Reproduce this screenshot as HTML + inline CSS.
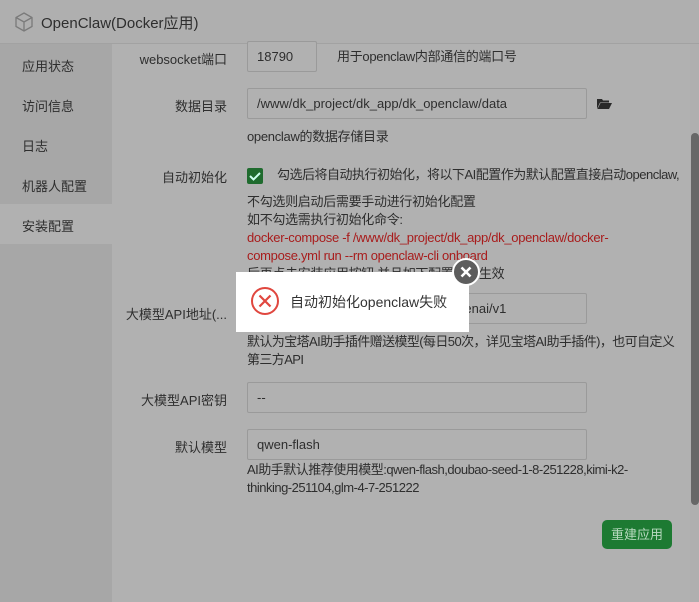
<!DOCTYPE html>
<html><head><meta charset="utf-8"><style>
*{margin:0;padding:0;box-sizing:border-box}
body{width:699px;height:602px;overflow:hidden;background:#b1b1b1;font-family:"Liberation Sans","Noto Sans CJK SC",sans-serif;font-size:13px;color:#333;position:relative}
.abs{position:absolute;white-space:nowrap}
.title{left:0;top:0;width:699px;height:44px;background:#afafaf;border-bottom:1px solid #a2a2a2}
.title span{position:absolute;left:41px;top:12px;font-size:15px;color:#2e2e2e}
.side{left:0;top:44px;width:112px;height:558px;background:#a7a7a7}
.side div{position:absolute;left:22px;font-size:13px;color:#2e2e2e}
.lbl{right:472px;text-align:right;color:#2e2e2e}
.inp{background:#b1b1b1;border:1px solid #9a9a9a;border-radius:2px;height:31px;padding:0 9px;line-height:29px;color:#2e2e2e}
.t{left:247px;color:#2e2e2e;line-height:18px;letter-spacing:-0.3px}
.red{color:#a81c1c}
</style></head><body>
<div class="abs title">
<svg class="abs" style="left:13px;top:11px" width="22" height="22" viewBox="0 0 22 22" fill="none" stroke="#7a7a7a" stroke-width="1.3"><path d="M11 2L19 6.5V15.5L11 20L3 15.5V6.5Z M3 6.5L11 11L19 6.5 M11 11V20"/></svg>
<span>OpenClaw(Docker应用)</span></div>
<div class="abs side">
<div style="top:12px">应用状态</div>
<div style="top:52px">访问信息</div>
<div style="top:92px">日志</div>
<div style="top:132px">机器人配置</div>
<div style="top:160px;left:0;width:112px;height:40px;background:#b1b1b1"></div>
<div style="top:172px">安装配置</div>
</div>
<div class="abs lbl" style="top:49px">websocket端口</div>
<div class="abs inp" style="left:247px;top:41px;width:70px">18790</div>
<div class="abs t" style="left:337px;top:48px">用于openclaw内部通信的端口号</div>
<div class="abs lbl" style="top:96px">数据目录</div>
<div class="abs inp" style="left:247px;top:88px;width:340px">/www/dk_project/dk_app/dk_openclaw/data</div>
<svg class="abs" style="left:597px;top:98px" width="15" height="12" viewBox="0 0 15 12"><path d="M0 1h5l1 1.5h6v2H3L0 11z M3.5 5H15L12 11H0.5z" fill="#2a2a2a"/></svg>
<div class="abs t" style="top:128px">openclaw的数据存储目录</div>
<div class="abs lbl" style="top:167px">自动初始化</div>
<div class="abs" style="left:247px;top:168px;width:16px;height:16px;background:#1f6b2e;border-radius:2px"><svg width="16" height="16"><path d="M3 8l3.5 3.5L13 5" stroke="#cfe" stroke-width="2" fill="none"/></svg></div>
<div class="abs t" style="left:277px;top:166px;letter-spacing:-0.5px">勾选后将自动执行初始化，将以下AI配置作为默认配置直接启动openclaw,</div>
<div class="abs t" style="top:193px">不勾选则启动后需要手动进行初始化配置<br>如不勾选需执行初始化命令:<br><span class="red">docker-compose -f /www/dk_project/dk_app/dk_openclaw/docker-<br>compose.yml run --rm openclaw-cli onboard</span><br>后再点击安装应用按钮,并且如下配置不会生效</div>
<div class="abs lbl" style="top:304px">大模型API地址(...</div>
<div class="abs inp" style="left:247px;top:293px;width:340px">https://www.bt.cn/plugin_api/chat/openai/v1</div>
<div class="abs t" style="top:333px;letter-spacing:-0.6px">默认为宝塔AI助手插件赠送模型(每日50次，详见宝塔AI助手插件)，也可自定义<br>第三方API</div>
<div class="abs lbl" style="top:390px">大模型API密钥</div>
<div class="abs inp" style="left:247px;top:382px;width:340px">--</div>
<div class="abs lbl" style="top:437px">默认模型</div>
<div class="abs inp" style="left:247px;top:429px;width:340px">qwen-flash</div>
<div class="abs t" style="top:461px;letter-spacing:-0.5px">AI助手默认推荐使用模型:qwen-flash,doubao-seed-1-8-251228,kimi-k2-<br>thinking-251104,glm-4-7-251222</div>
<div class="abs" style="left:602px;top:520px;width:70px;height:29px;background:#1d7a32;border-radius:5px;color:#b8d9bf;text-align:center;line-height:29px">重建应用</div>
<div class="abs" style="left:690px;top:44px;width:9px;height:558px;background:#afafaf"></div>
<div class="abs" style="left:691px;top:133px;width:8px;height:372px;background:#676767;border-radius:4px"></div>
<div class="abs" style="left:236px;top:272px;width:233px;height:60px;background:#fff"></div>
<svg class="abs" style="left:250px;top:286px" width="30" height="30" viewBox="0 0 30 30"><circle cx="15" cy="15" r="13" fill="none" stroke="#e0473f" stroke-width="2"/><path d="M9.5 9.5l11 11M20.5 9.5l-11 11" stroke="#e0473f" stroke-width="2.2"/></svg>
<div class="abs" style="left:290px;top:292px;font-size:14px;color:#333">自动初始化openclaw失败</div>
<svg class="abs" style="left:452px;top:258px" width="28" height="28" viewBox="0 0 28 28"><circle cx="14" cy="14" r="13" fill="#5d5d5d" stroke="#fff" stroke-width="2"/><path d="M9.5 9.5l9 9M18.5 9.5l-9 9" stroke="#fff" stroke-width="2.6"/></svg>
</body></html>
